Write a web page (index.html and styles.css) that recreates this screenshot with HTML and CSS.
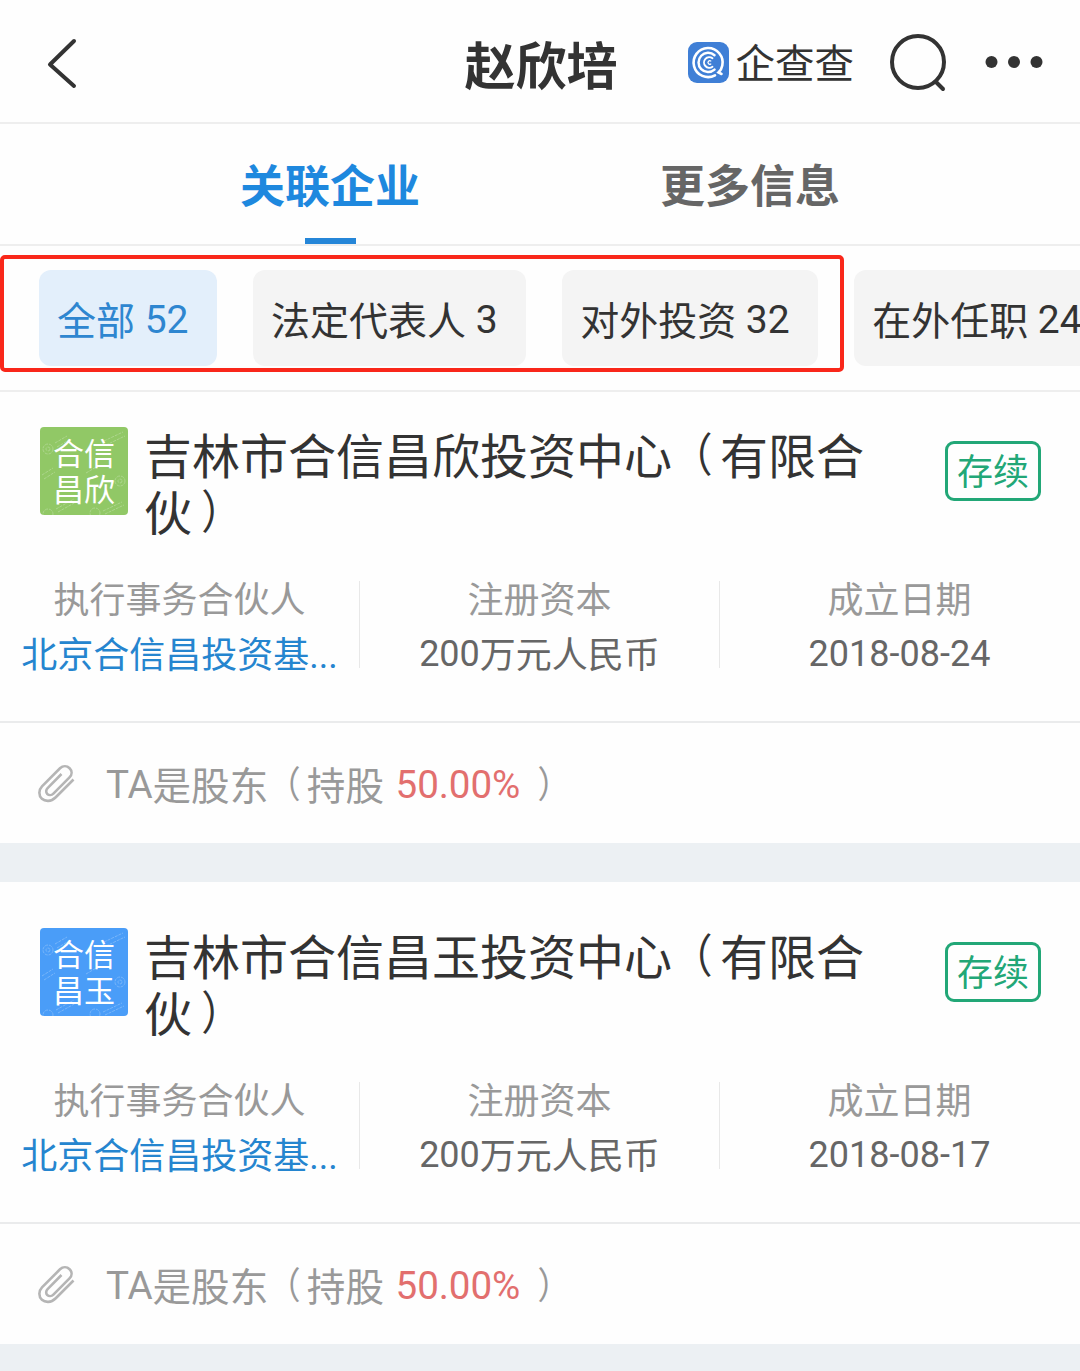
FILE: index.html
```html
<!DOCTYPE html>
<html lang="zh-CN">
<head>
<meta charset="utf-8">
<title>赵欣培 - 企查查</title>
<link rel="stylesheet" href="styles.css">
</head>
<body>
<svg width="0" height="0" class="defs" aria-hidden="true">
  <symbol id="clip" viewBox="0 0 40 40">
    <path d="M36.500 15.500 L18.500 33.500 C14 38 8 37.500 4.900 34.700 C1.500 31.500 1.500 26 5 22.300 L23 4.300 C26 1.500 30 1.700 32.600 4.200 C35.200 6.800 35.300 10.500 32.500 13.400 L16.400 29.600 C14.500 31.500 11.800 31.400 10.300 30 C8.700 28.400 8.900 25.900 10.600 24.200 L24.500 10" fill="none" stroke="#b5b5b5" stroke-width="2.600"/>
  </symbol>
  <symbol id="seals" viewBox="0 0 88 88">
    <g fill="none" stroke="#fff" stroke-width="1" opacity=".25" stroke-dasharray="3 1">
      <circle cx="8" cy="22" r="5"/><circle cx="8" cy="22" r="2"/>
      <circle cx="80" cy="54" r="5"/><circle cx="80" cy="54" r="2"/>
      <circle cx="55" cy="86" r="5"/><circle cx="8" cy="87" r="5"/>
      <path d="M15 16l12-7M17 20l12-7M64 14l19-9M66 18l19-9M2 48l11-7M4 52l11-7M16 82l18-10M18 85l18-10M63 84l19-9M65 87l19-9M46 46l12-7"/>
    </g>
  </symbol>
</svg>

<header class="topbar">
  <svg class="back" width="32" height="52" viewBox="0 0 32 52"><path d="M28 4 4 27.500 28 49" fill="none" stroke="#333" stroke-width="4" stroke-linecap="round" stroke-linejoin="round"/></svg>
  <h1 class="title">赵欣培</h1>
  <div class="actions">
    <div class="brand">
      <svg width="41" height="41" viewBox="0 0 41 41">
        <rect width="41" height="41" rx="9" fill="#3f7fd6"/>
        <g fill="none" stroke="#fff" stroke-linecap="round">
          <path d="M27 33.300A14.500 14.500 0 1 1 34.300 23.500C33.800 26.500 32 29 30.500 30.500L33.500 32" stroke-width="2.600"/>
          <path d="M26.500 13.200A9.600 9.600 0 1 0 26.500 27.600" stroke-width="2.500"/>
          <path d="M24.500 16.200A5.300 5.300 0 1 0 24.500 24.700" stroke-width="1.900"/>
          <path d="M22.800 19A1.800 1.800 0 1 0 22.800 22" stroke-width="1.300"/>
        </g>
      </svg>
      <span class="brand-name">企查查</span>
    </div>
    <svg class="search" width="58" height="60" viewBox="0 0 58 60"><g fill="none" stroke="#333" stroke-width="4"><circle cx="28" cy="28" r="26"/><path d="M46 48 53 55" stroke-linecap="round"/></g></svg>
    <svg class="more" width="58" height="12" viewBox="0 0 58 12" fill="#333"><circle cx="6.500" cy="6" r="6"/><circle cx="29" cy="6" r="6"/><circle cx="51.500" cy="6" r="6"/></svg>
  </div>
</header>

<nav class="tabs">
  <a class="tab active">关联企业</a>
  <a class="tab">更多信息</a>
</nav>

<div class="filters">
  <span class="chip on">全部 <span class="num">52</span></span>
  <span class="chip">法定代表人 <span class="num">3</span></span>
  <span class="chip">对外投资 <span class="num">32</span></span>
  <span class="chip">在外任职 <span class="num">24</span></span>
  <div class="highlight"></div>
</div>

<main>
  <section class="card first">
    <div class="head">
      <div class="avatar green"><svg class="seal"><use href="#seals"/></svg><span>合信<br>昌欣</span></div>
      <h2 class="name">吉林市合信昌欣投资中心<span class="open">（</span>有限合伙<span class="close">）</span></h2>
      <span class="badge">存续</span>
    </div>
    <div class="stats">
      <div class="stat"><span class="label">执行事务合伙人</span><span class="value link">北京合信昌投资基...</span></div>
      <div class="stat"><span class="label">注册资本</span><span class="value"><span class="num">200</span>万元人民币</span></div>
      <div class="stat"><span class="label">成立日期</span><span class="value"><span class="num">2018-08-24</span></span></div>
    </div>
    <div class="relation"><svg class="clip"><use href="#clip"/></svg><span><span class="num">TA</span>是股东<span class="open">（</span>持股 <em class="num">50.00%</em> <span class="close">）</span></span></div>
  </section>

  <section class="card">
    <div class="head">
      <div class="avatar blue"><svg class="seal"><use href="#seals"/></svg><span>合信<br>昌玉</span></div>
      <h2 class="name">吉林市合信昌玉投资中心<span class="open">（</span>有限合伙<span class="close">）</span></h2>
      <span class="badge">存续</span>
    </div>
    <div class="stats">
      <div class="stat"><span class="label">执行事务合伙人</span><span class="value link">北京合信昌投资基...</span></div>
      <div class="stat"><span class="label">注册资本</span><span class="value"><span class="num">200</span>万元人民币</span></div>
      <div class="stat"><span class="label">成立日期</span><span class="value"><span class="num">2018-08-17</span></span></div>
    </div>
    <div class="relation"><svg class="clip"><use href="#clip"/></svg><span><span class="num">TA</span>是股东<span class="open">（</span>持股 <em class="num">50.00%</em> <span class="close">）</span></span></div>
  </section>
</main>
</body>
</html>
```
FILE: styles.css
```css
* { box-sizing: border-box; }

body {
  margin: 0;
  height: 1371px;
  overflow: hidden;
  background: #ecf0f3;
  color: #333;
  font-family: Roboto, "Noto Sans CJK SC", sans-serif;
}

.defs { display: none; }

/* Latin digits sit slightly above the Chinese baseline */
.num { line-height: 1; vertical-align: 2px; }

/* Full-width brackets drawn narrower and nearer the middle of their cell */
.open, .close { display: inline-block; width: 1em; line-height: 1; }
.open { transform: translate(-.08em, -1px) scale(.85, .96); }
.close { transform: translate(.12em, -1px) scale(.85, .96); }

.topbar {
  display: grid;
  grid-template-columns: 1fr auto 1fr;
  align-items: center;
  height: 124px;
  padding: 0 37px 0 46px;
  background: #fefefe;
  border-bottom: 2px solid #eee;
}
.back { display: block; margin-top: 4px; }
.title {
  margin: 13px 0 0 -7px;
  font-size: 51px;
  line-height: 60px;
  font-weight: 700;
}
.actions { display: flex; align-items: center; justify-content: flex-end; }
.brand { display: flex; align-items: center; gap: 7px; margin-top: 2px; }
.brand-name { font-size: 39.500px; line-height: 41px; margin: 2px 0 -2px; }
.search { margin: 6px 0 0 36px; }
.more { margin: 2px 0 0 37px; }

.tabs {
  display: flex;
  justify-content: center;
  height: 122px;
  background: #fefefe;
  border-bottom: 2px solid #eee;
}
.tab {
  display: flex;
  flex-direction: column;
  align-items: center;
  width: 420px;
  padding-top: 34px;
  font-size: 45px;
  line-height: 60px;
  font-weight: 700;
  color: #666;
}
.tab.active { color: #1e88de; }
.tab.active::after {
  content: "";
  width: 51px;
  height: 6px;
  margin-top: auto;
  background: #2586d8;
}

.filters {
  position: relative;
  display: flex;
  gap: 36px;
  height: 146px;
  padding: 24px 0 0 39px;
  overflow: hidden;
  background: #fefefe;
  border-bottom: 2px solid #eee;
}
.chip {
  flex: none;
  height: 96px;
  padding: 0 28.500px 0 18px;
  border-radius: 12px;
  background: #f4f4f4;
  font-size: 39px;
  line-height: 105px;
  white-space: nowrap;
}
.chip.on { background: #e3effb; color: #2e86d0; }
.highlight {
  position: absolute;
  left: 0;
  top: 9px;
  width: 844px;
  height: 117px;
  border: 4px solid #f9271a;
  border-radius: 5px;
}

.card {
  padding-top: 46px;
  margin-bottom: 39px;
  background: #fefefe;
}
.card.first { padding-top: 35px; }
.head {
  display: flex;
  align-items: flex-start;
  height: 154px;
  padding: 0 39px 0 40px;
}
.avatar {
  position: relative;
  flex: none;
  width: 88px;
  height: 88px;
  border-radius: 4px;
  color: #fff;
  font-size: 31px;
  line-height: 36px;
  text-align: center;
  padding-top: 10px;
}
.green { background: #91c866; }
.blue { background: #4a9df8; }
.seal { position: absolute; inset: 0; width: 88px; height: 88px; }
.avatar span { position: relative; }
.name {
  width: 730px;
  margin: 2px auto 0 16px;
  font-size: 48px;
  line-height: 57px;
  font-weight: 400;
}
.badge {
  width: 96px;
  height: 60px;
  margin-top: 14px;
  border: 3px solid #22a777;
  border-radius: 9px;
  color: #22a777;
  font-size: 36px;
  line-height: 59px;
  text-align: center;
}

.stats {
  display: grid;
  grid-template-columns: repeat(3, 1fr);
  height: 140px;
}
.stat {
  display: flex;
  flex-direction: column;
  align-items: center;
  height: 87px;
  padding-right: 1px;
  font-size: 36px;
  line-height: 55px;
  white-space: nowrap;
}
.stat + .stat { box-shadow: -1px 0 #e8e8e8; }
.label { color: #999; margin-top: -7px; }
.value { color: #666; }
.link { color: #2585cf; }

.relation {
  display: flex;
  align-items: center;
  height: 122px;
  padding: 8px 0 0 38px;
  border-top: 2px solid #eaebec;
  color: #999;
  font-size: 38.600px;
  line-height: 60px;
}
.clip { width: 40px; height: 40px; margin: -6px 28px 0 -1px; }
.relation > span { margin-left: 1px; }
.relation em { font-style: normal; margin-left: 2px; color: #e26f6e; }
.relation .num { letter-spacing: -.1px; }
```
